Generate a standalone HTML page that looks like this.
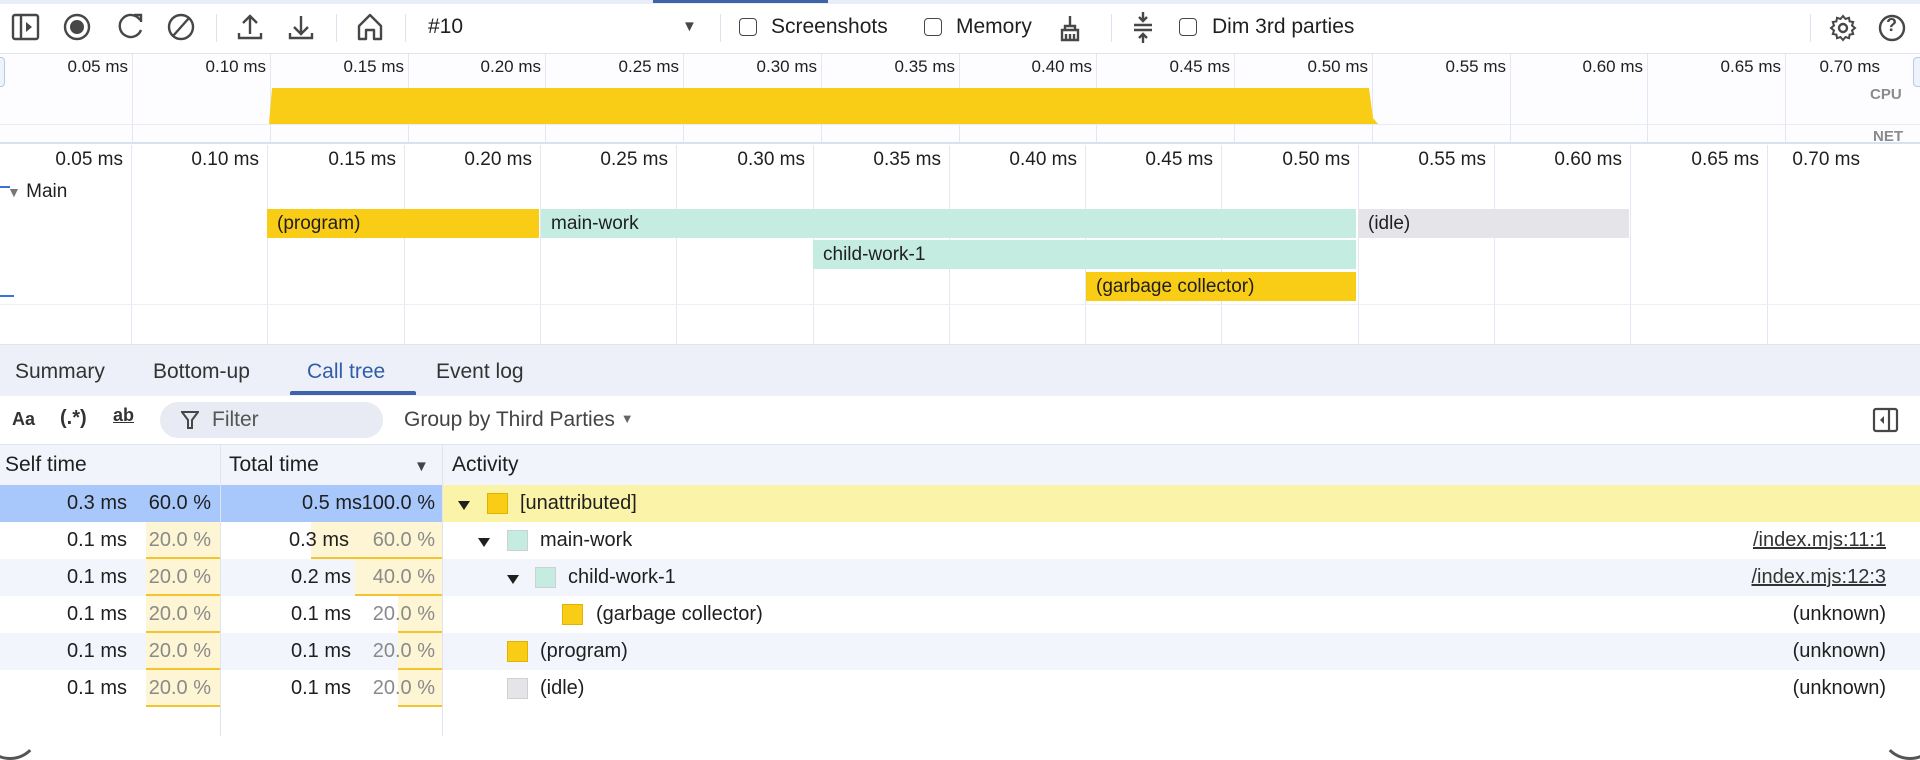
<!DOCTYPE html>
<html><head><meta charset="utf-8"><style>
*{box-sizing:border-box;margin:0;padding:0}
body{width:1920px;height:736px;overflow:hidden;background:#fff;font-family:"Liberation Sans",sans-serif;color:#1f1f1f;position:relative}
.a{position:absolute}
.t{position:absolute;white-space:nowrap}
.vl{position:absolute;width:1px;background:#e1e7f3}
.sep{position:absolute;width:1px;background:#dde3ee;top:14px;height:28px}
.cb{position:absolute;width:18px;height:18px;border:1.6px solid #474747;border-radius:4px;top:18px}
.bar{position:absolute;height:29px;font-size:19px;line-height:29px;padding-left:10px;color:#1f1f1f;white-space:nowrap;overflow:hidden}
.row{position:absolute;left:0;width:1920px;height:37px;font-size:20px;line-height:37px}
.num{position:absolute;white-space:nowrap;text-align:right}
.pb{position:absolute;top:0;height:37px;background:#fdf5d4;border-bottom:2px solid #f2c530}
.sq{position:absolute;width:21px;height:21px;top:8px;border:1px solid #d0d0d0}
.tri{position:absolute;top:16px;width:0;height:0;border-left:6px solid transparent;border-right:6px solid transparent;border-top:9px solid #1f1f1f}
.gray{color:#8a8a8a}
</style></head><body>
<div class="a" style="left:0;top:0;width:1920px;height:4px;background:#e8edf7"></div>
<div class="a" style="left:653px;top:0;width:175px;height:3px;background:#3d64a8"></div>
<svg class="a" style="left:0;top:0" width="1920" height="54" fill="none" stroke="#474747" stroke-width="2.4">
<rect x="13" y="15" width="25" height="24" rx="2"/><line x1="21" y1="15" x2="21" y2="39"/><path d="M26 22 L32 27 L26 32Z" fill="#474747" stroke="none"/>
<circle cx="77" cy="27" r="12"/><circle cx="77" cy="27" r="7" fill="#474747" stroke="none"/>
<path d="M140 20 A11 11 0 1 0 141 30"/><path d="M134 15 L141 15 L141 22" stroke-linejoin="miter"/>
<circle cx="181" cy="27" r="12"/><line x1="173" y1="36" x2="189" y2="18"/>
<path d="M250 34 V16 M243 23 L250 16 L257 23 M239 33 V38 H261 V33"/>
<path d="M301 16 V34 M294 27 L301 34 L308 27 M290 33 V38 H312 V33"/>
<path d="M359 39 V26 L370 15 L381 26 V39 H374 V30 H366 V39Z" stroke-linejoin="round"/>
<path d="M1070 16 V26 M1065 26 H1075 V30 H1065Z M1062 30 H1078 V40 H1062Z M1066 34 V40 M1070 34 V40 M1074 34 V40"/>
<path d="M1143 12 V20 M1139 17 L1143 21 L1147 17 M1134 25 H1152 M1134 30 H1152 M1143 43 V35 M1139 38 L1143 34 L1147 38"/>
<circle cx="1843" cy="28" r="4"/><path d="M1843 16 l2.5 3 3.5-1.2 .6 3.6 3.6.6-1.2 3.5 3 2.5-3 2.5 1.2 3.5-3.6.6-.6 3.6-3.5-1.2-2.5 3-2.5-3-3.5 1.2-.6-3.6-3.6-.6 1.2-3.5-3-2.5 3-2.5-1.2-3.5 3.6-.6.6-3.6 3.5 1.2z" stroke-width="2"/>
<circle cx="1892" cy="28" r="12"/>
</svg>
<div class="t" style="left:1886px;top:15px;font-size:18px;font-weight:bold;color:#474747">?</div>
<div class="sep" style="left:216px"></div><div class="sep" style="left:336px"></div><div class="sep" style="left:405px"></div>
<div class="sep" style="left:720px"></div><div class="sep" style="left:1111px"></div><div class="sep" style="left:1810px"></div>
<div class="t" style="left:428px;top:15px;font-size:21px">#10</div>
<div class="t" style="left:682px;top:18px;font-size:15px;color:#474747">▼</div>
<div class="cb" style="left:739px"></div><div class="t" style="left:771px;top:15px;font-size:21px">Screenshots</div>
<div class="cb" style="left:924px"></div><div class="t" style="left:956px;top:15px;font-size:21px">Memory</div>
<div class="cb" style="left:1179px"></div><div class="t" style="left:1212px;top:15px;font-size:21px">Dim 3rd parties</div>
<div class="a" style="left:0;top:53px;width:1920px;height:91px;background:#fdfdff;border-top:1px solid #dfe5f0;border-bottom:2px solid #d9e0ee"></div>
<div class="a" style="left:0;top:124px;width:1920px;height:1px;background:#e8ecf4"></div>
<div id="ov"></div>
<svg class="a" style="left:0;top:0" width="1920" height="144"><path d="M272 88 L1369 88 L1373 118 L1378 124 L269 124Z" fill="#f9cc16"/></svg>
<div class="t" style="left:1870px;top:86px;font-size:15px;font-weight:bold;color:#8a8a8a">CPU</div>
<div class="t" style="left:1873px;top:128px;font-size:15px;font-weight:bold;color:#8a8a8a">NET</div>
<div class="a" style="left:0;top:57px;width:5px;height:30px;border:1px solid #b8c8e8;border-left:none;border-radius:0 4px 4px 0;background:#eef2fb"></div>
<div class="a" style="left:1913px;top:57px;width:7px;height:30px;border:1px solid #b8c8e8;border-right:none;border-radius:4px 0 0 4px;background:#eef2fb"></div>
<div id="mn"></div>
<div class="a" style="left:0;top:304px;width:1920px;height:1px;background:#eceff5"></div>
<div class="t" style="left:7px;top:181px;font-size:19px"><span style="color:#777;font-size:14px">▼</span> Main</div>
<div class="a" style="left:0;top:186px;width:10px;height:2px;background:#3b74d6"></div>
<div class="a" style="left:0;top:295px;width:14px;height:2px;background:#3b74d6"></div>
<div class="bar" style="left:267px;top:209px;width:272px;background:#f9cc16">(program)</div>
<div class="bar" style="left:541px;top:209px;width:815px;background:#c5ece1">main-work</div>
<div class="bar" style="left:1358px;top:209px;width:271px;background:#e4e4e9">(idle)</div>
<div class="bar" style="left:813px;top:240px;width:543px;background:#c5ece1">child-work-1</div>
<div class="bar" style="left:1086px;top:272px;width:270px;background:#f9cc16">(garbage collector)</div>
<div class="a" style="left:0;top:344px;width:1920px;height:52px;background:#edf0f8;border-top:1px solid #dfe5f0"></div>
<div class="t" style="left:15px;top:360px;font-size:21px;color:#333">Summary</div>
<div class="t" style="left:153px;top:360px;font-size:21px;color:#333">Bottom-up</div>
<div class="t" style="left:307px;top:360px;font-size:21px;color:#2f5ea8">Call tree</div>
<div class="t" style="left:436px;top:360px;font-size:21px;color:#333">Event log</div>
<div class="a" style="left:290px;top:391px;width:126px;height:4px;background:#3d64a8;border-radius:2px 2px 0 0"></div>
<div class="t" style="left:12px;top:409px;font-size:18px;font-weight:bold;color:#333">Aa</div>
<div class="t" style="left:60px;top:407px;font-size:20px;font-weight:bold;color:#333">(.*)</div>
<div class="t" style="left:113px;top:405px;font-size:18px;font-weight:bold;color:#333;text-decoration:underline">ab</div>
<div class="a" style="left:160px;top:402px;width:223px;height:36px;border-radius:18px;background:#e8ebf3"></div>
<svg class="a" style="left:181px;top:410px" width="18" height="20"><path d="M1 2 H17 L11 10 V18 L7 18 V10Z" fill="none" stroke="#474747" stroke-width="2"/></svg>
<div class="t" style="left:212px;top:408px;font-size:21px;color:#555">Filter</div>
<div class="t" style="left:404px;top:408px;font-size:21px;color:#444">Group by Third Parties <span style="font-size:13px;color:#666;vertical-align:3px">▼</span></div>
<svg class="a" style="left:1872px;top:407px" width="28" height="26"><rect x="2" y="2" width="23" height="22" rx="2" fill="none" stroke="#474747" stroke-width="2.2"/><line x1="17" y1="2" x2="17" y2="24" stroke="#474747" stroke-width="2.2"/><path d="M12 9 L8 13 L12 17Z" fill="#474747"/></svg>
<div class="a" style="left:0;top:444px;width:1920px;height:41px;background:#f1f4fb;border-top:1px solid #dfe5f0"></div>
<div class="t" style="left:5px;top:453px;font-size:21px">Self time</div>
<div class="t" style="left:229px;top:453px;font-size:21px">Total time</div>
<div class="t" style="left:414px;top:458px;font-size:15px;color:#444">▼</div>
<div class="t" style="left:452px;top:453px;font-size:21px">Activity</div>
<div class="row" style="top:485px;background:#fbf3a8"><div class="a" style="left:0;top:0;width:442px;height:37px;background:#a8c7fa"></div>
<div class="num" style="right:1793px">0.3 ms</div><div class="num" style="right:1709px">60.0 %</div>
<div class="num" style="right:1558px">0.5 ms</div><div class="num" style="right:1485px">100.0 %</div>
<div class="tri" style="left:458px"></div><div class="sq" style="left:487px;background:#f9cc16;border-color:#e0b300"></div><div class="t" style="left:520px">[unattributed]</div></div>
<div class="row" style="top:522px;background:#fff"><div class="pb" style="left:146px;width:74px"></div><div class="pb" style="left:311px;width:131px"></div>
<div class="num" style="right:1793px">0.1 ms</div><div class="num gray" style="right:1709px">20.0 %</div>
<div class="num" style="right:1571px">0.3 ms</div><div class="num gray" style="right:1485px">60.0 %</div>
<div class="tri" style="left:478px"></div><div class="sq" style="left:507px;background:#c5ece1"></div><div class="t" style="left:540px">main-work</div>
<div class="num" style="right:34px;text-decoration:underline;color:#333">/index.mjs:11:1</div></div>
<div class="row" style="top:559px;background:#f2f5fb"><div class="pb" style="left:146px;width:74px"></div><div class="pb" style="left:355px;width:87px"></div>
<div class="num" style="right:1793px">0.1 ms</div><div class="num gray" style="right:1709px">20.0 %</div>
<div class="num" style="right:1569px">0.2 ms</div><div class="num gray" style="right:1485px">40.0 %</div>
<div class="tri" style="left:507px"></div><div class="sq" style="left:535px;background:#c5ece1"></div><div class="t" style="left:568px">child-work-1</div>
<div class="num" style="right:34px;text-decoration:underline;color:#333">/index.mjs:12:3</div></div>
<div class="row" style="top:596px;background:#fff"><div class="pb" style="left:146px;width:74px"></div><div class="pb" style="left:398px;width:44px"></div>
<div class="num" style="right:1793px">0.1 ms</div><div class="num gray" style="right:1709px">20.0 %</div>
<div class="num" style="right:1569px">0.1 ms</div><div class="num gray" style="right:1485px">20.0 %</div>
<div class="sq" style="left:562px;background:#f9cc16;border-color:#e0b300"></div><div class="t" style="left:596px">(garbage collector)</div>
<div class="num" style="right:34px">(unknown)</div></div>
<div class="row" style="top:633px;background:#f2f5fb"><div class="pb" style="left:146px;width:74px"></div><div class="pb" style="left:398px;width:44px"></div>
<div class="num" style="right:1793px">0.1 ms</div><div class="num gray" style="right:1709px">20.0 %</div>
<div class="num" style="right:1569px">0.1 ms</div><div class="num gray" style="right:1485px">20.0 %</div>
<div class="sq" style="left:507px;background:#f9cc16;border-color:#e0b300"></div><div class="t" style="left:540px">(program)</div>
<div class="num" style="right:34px">(unknown)</div></div>
<div class="row" style="top:670px;background:#fff"><div class="pb" style="left:146px;width:74px"></div><div class="pb" style="left:398px;width:44px"></div>
<div class="num" style="right:1793px">0.1 ms</div><div class="num gray" style="right:1709px">20.0 %</div>
<div class="num" style="right:1569px">0.1 ms</div><div class="num gray" style="right:1485px">20.0 %</div>
<div class="sq" style="left:507px;background:#e4e4e9"></div><div class="t" style="left:540px">(idle)</div>
<div class="num" style="right:34px">(unknown)</div></div>
<div class="vl" style="left:220px;top:444px;height:292px;background:#dfe5f0"></div>
<div class="vl" style="left:442px;top:444px;height:292px;background:#dfe5f0"></div>
<div class="a" style="left:-20px;top:700px;width:60px;height:60px;border:3px solid #555;border-radius:30px;border-top-color:transparent;border-right-color:transparent"></div>
<div class="a" style="left:1880px;top:700px;width:60px;height:60px;border:3px solid #555;border-radius:30px;border-top-color:transparent;border-left-color:transparent"></div>
<script>
var ov=document.getElementById('ov'),h='';
for(var i=0;i<13;i++){var x=Math.round(132+137.75*i);h+='<div class="vl" style="left:'+x+'px;top:54px;height:88px"></div>';
h+='<div class="t" style="left:'+(x-80)+'px;width:76px;text-align:right;top:57px;font-size:17px">'+(0.05*(i+1)).toFixed(2)+' ms</div>';}
h+='<div class="t" style="left:1800px;width:80px;text-align:right;top:57px;font-size:17px">0.70 ms</div>';
ov.innerHTML=h;
var mn=document.getElementById('mn');h='';
for(i=0;i<13;i++){x=Math.round(131+136.3*i);h+='<div class="vl" style="left:'+x+'px;top:145px;height:199px"></div>';
h+='<div class="t" style="left:'+(x-90)+'px;width:82px;text-align:right;top:149px;font-size:19px">'+(0.05*(i+1)).toFixed(2)+' ms</div>';}
h+='<div class="t" style="left:1778px;width:82px;text-align:right;top:149px;font-size:19px">0.70 ms</div>';
mn.innerHTML=h;
</script>
</body></html>
